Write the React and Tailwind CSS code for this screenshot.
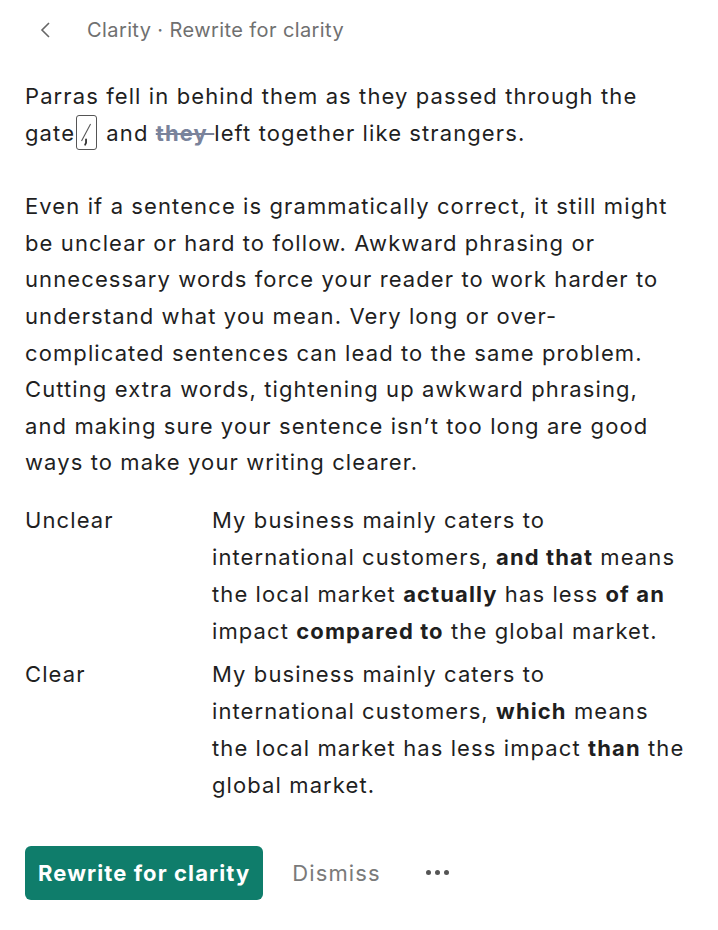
import React from 'react';

const font = { fontFamily: 'Inter, "Liberation Sans", sans-serif' };

function CommaMark() {
    return (
        <span className="inline-block align-[-9px] ml-[1px] mr-[2px] w-[21px] h-[35px] border border-[#555] rounded-[3px] relative">
            <svg viewBox="0 0 21 35" className="absolute inset-0 w-full h-full">
                <line x1="15" y1="8" x2="5" y2="27" stroke="#555" strokeWidth="1.2" />
                <path d="M10 25 L10 29 L9 31" stroke="#333" strokeWidth="2" fill="none" strokeLinecap="round" />
            </svg>
        </span>
    );
}

export default function App() {
    return (
        <div className="w-[718px] h-[930px] bg-white text-[#1f1f1f] overflow-hidden" style={font}>
            <div className="flex items-center h-[60px] pl-[38px]">
                <svg width="14" height="20" viewBox="0 0 14 20" className="mr-[35px]">
                    <path d="M11 3 L4 10 L11 17" stroke="#666" strokeWidth="1.6" fill="none" />
                </svg>
                <span className="text-[20px] tracking-[0.4px] text-[#707070]">Clarity · Rewrite for clarity</span>
            </div>

            <div className="pl-[25px] pr-[31px] pt-[18px] text-[22px] tracking-[1.1px] leading-[36.6px]">
                <p>
                    Parras fell in behind them as they passed through the gate<CommaMark /> and{' '}
                    <span className="font-bold text-[#7a839b] line-through decoration-2">they </span>left together like strangers.
                </p>

                <p className="mt-[37px]">
                    Even if a sentence is grammatically correct, it still might be unclear or hard to follow. Awkward phrasing or unnecessary words force your reader to work harder to understand what you mean. Very long or over-complicated sentences can lead to the same problem. Cutting extra words, tightening up awkward phrasing, and making sure your sentence isn’t too long are good ways to make your writing clearer.
                </p>

                <div className="grid grid-cols-[187px_1fr] gap-y-[6px] mt-[21px] leading-[37px]">
                    <div>Unclear</div>
                    <div>
                        My business mainly caters to international customers, <b>and that</b> means the local market <b>actually</b> has less <b>of an</b> impact <b>compared to</b> the global market.
                    </div>
                    <div>Clear</div>
                    <div>
                        My business mainly caters to international customers, <b>which</b> means the local market has less impact <b>than</b> the global market.
                    </div>
                </div>

                <div className="flex items-center mt-[42px]">
                    <button className="h-[54px] px-[13px] rounded-[6px] bg-[#0f7d6b] text-white font-bold text-[22px] tracking-[1.1px]">Rewrite for clarity</button>
                    <span className="ml-[29px] text-[#7a7a7a]">Dismiss</span>
                    <span className="ml-[45px] flex gap-[4px]">
                        <span className="w-[5px] h-[5px] rounded-full bg-[#555]" />
                        <span className="w-[5px] h-[5px] rounded-full bg-[#555]" />
                        <span className="w-[5px] h-[5px] rounded-full bg-[#555]" />
                    </span>
                </div>
            </div>
        </div>
    );
}
